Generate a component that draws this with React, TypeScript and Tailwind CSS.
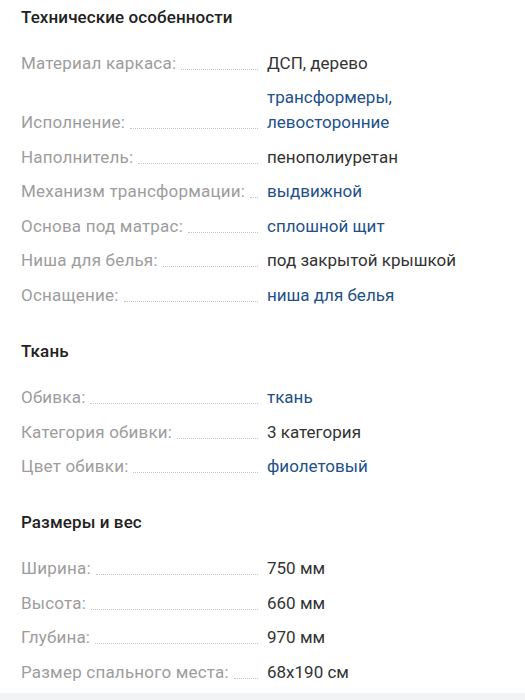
type Row = { label: string; value: string[]; link?: boolean };

const sections: { title: string; rows: Row[] }[] = [
  {
    title: 'Технические особенности',
    rows: [
      { label: 'Материал каркаса:', value: ['ДСП, дерево'] },
      { label: 'Исполнение:', value: ['трансформеры,', 'левосторонние'], link: true },
      { label: 'Наполнитель:', value: ['пенополиуретан'] },
      { label: 'Механизм трансформации:', value: ['выдвижной'], link: true },
      { label: 'Основа под матрас:', value: ['сплошной щит'], link: true },
      { label: 'Ниша для белья:', value: ['под закрытой крышкой'] },
      { label: 'Оснащение:', value: ['ниша для белья'], link: true },
    ],
  },
  {
    title: 'Ткань',
    rows: [
      { label: 'Обивка:', value: ['ткань'], link: true },
      { label: 'Категория обивки:', value: ['3 категория'] },
      { label: 'Цвет обивки:', value: ['фиолетовый'], link: true },
    ],
  },
  {
    title: 'Размеры и вес',
    rows: [
      { label: 'Ширина:', value: ['750 мм'] },
      { label: 'Высота:', value: ['660 мм'] },
      { label: 'Глубина:', value: ['970 мм'] },
      { label: 'Размер спального места:', value: ['68x190 см'] },
    ],
  },
];

function SpecRow({ row }: { row: Row }) {
  return (
    <div className="flex items-end">
      <div className="flex w-[237px] shrink-0 items-end">
        <span className="whitespace-nowrap tracking-[0.2px] text-[#9d9d9d]">{row.label}</span>
        <span className="mb-[6px] ml-[5px] flex-1 border-b border-dotted border-[#c4c4c4]" />
      </div>
      <div className={`ml-[9px] ${row.link ? 'text-[#22508a]' : 'text-[#333333]'}`}>
        {row.value.map((v) => (
          <div key={v}>{v}</div>
        ))}
      </div>
    </div>
  );
}

export default function App() {
  return (
    <div
      className="min-h-[700px] bg-white text-[17px] leading-[25px]"
      style={{ fontFamily: 'Roboto, "Noto Sans", sans-serif' }}
    >
      <div className="px-[21px] pt-[4.5px]">
        {sections.map((s, i) => (
          <section key={s.title} className={i > 0 ? 'mt-[31px]' : ''}>
            <h2 className="text-[17px] font-medium tracking-[0.1px] text-[#222222]">{s.title}</h2>
            <div className="mt-[21px] flex flex-col gap-[9.6px]">
              {s.rows.map((r) => (
                <SpecRow key={r.label} row={r} />
              ))}
            </div>
          </section>
        ))}
      </div>
      <div className="mt-[8px] h-[40px] bg-[#f1f3f4]" />
    </div>
  );
}
